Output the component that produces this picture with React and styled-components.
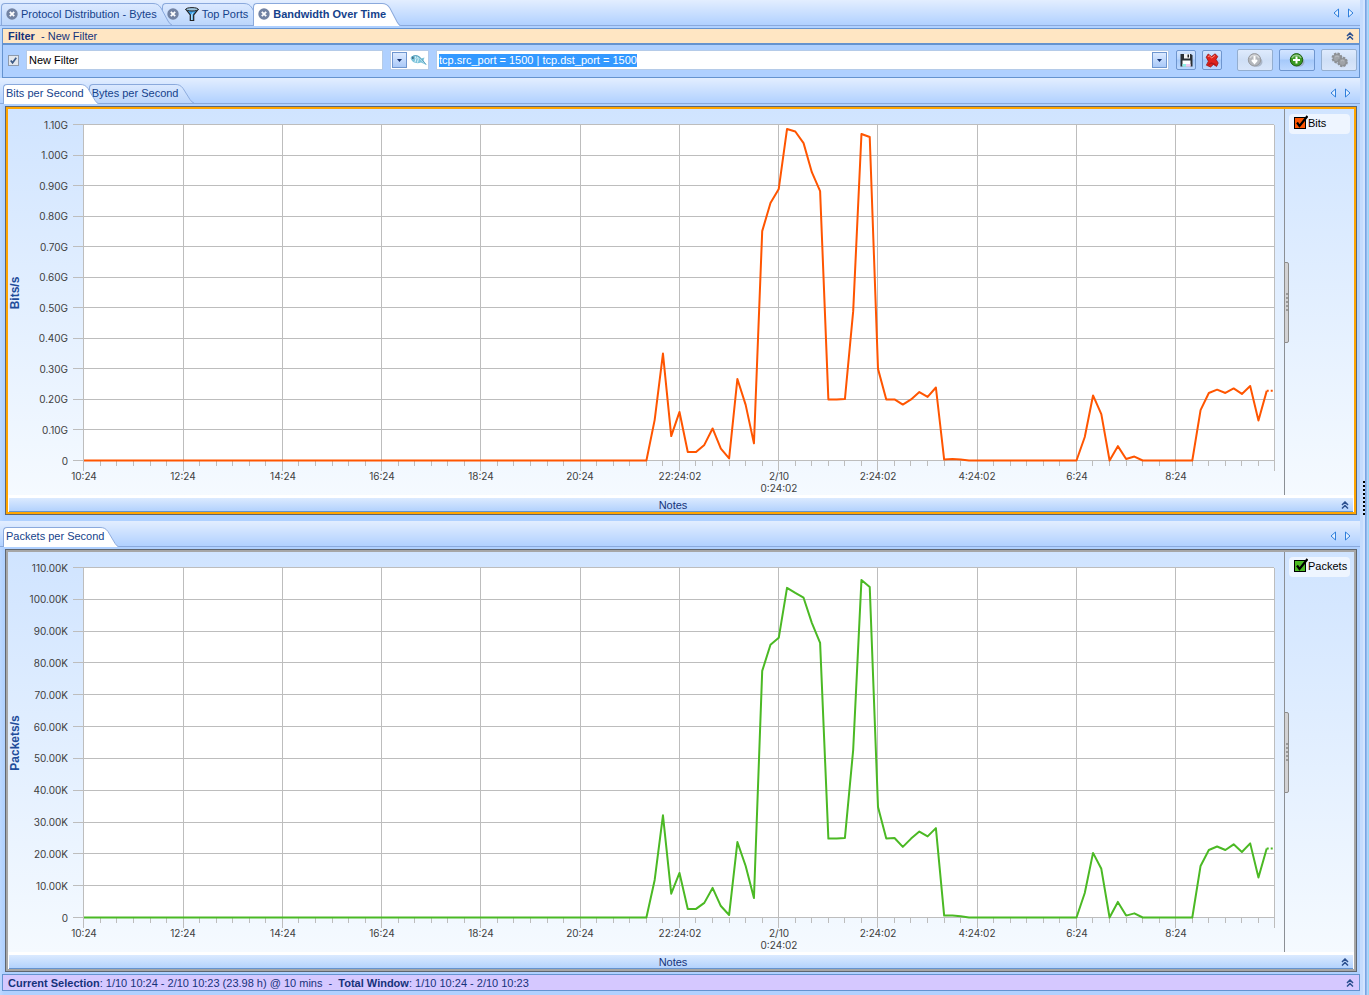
import React, { useLayoutEffect, useRef, useState } from "react";
import styled, { createGlobalStyle, css } from "styled-components";

const GlobalStyle = createGlobalStyle`
  *, *::before, *::after { box-sizing: border-box; }
  body {
    margin: 0;
    background: #b0d1ff;
    font-family: "Liberation Sans", Arial, sans-serif;
    font-size: 11px;
    line-height: 14px;
    color: #15428b;
  }
  button, input { font: inherit; color: inherit; }
  button { padding: 0; border: 0; background: none; }
`;

/* ---------- page frame ---------- */

const Page = styled.div`
  display: grid;
  grid-template-columns: minmax(0, 1fr) 9px;
  min-height: 100vh;
`;

const Main = styled.main`
  display: flex;
  flex-direction: column;
  min-width: 0;
  background: linear-gradient(90deg, #bcd8ff, #b0d1ff 4px);
`;

const Splitter = styled.div`
  display: flex;
  flex-direction: column;
  justify-content: center;
  align-items: flex-start;
  padding-left: 3px;
  background: linear-gradient(
    90deg,
    #c6dcfd 0 3px, #d3e4ff 3px 5px, #7aa6e2 5px 6px, #8fb6ec 6px 7px, #b4d2fb 7px 8px, #9ad8f6 8px
  );
`;

const Grip = styled.div`
  width: 2px;
  height: 34px;
  background: repeating-linear-gradient(#000 0 2px, transparent 2px 4px);
`;

/* ---------- tabs ---------- */

const Strip = styled.div`
  display: flex;
  align-items: flex-end;
  height: 26px;
  padding-left: ${(p) => (p.$inner ? 3 : 1)}px;
  padding-right: ${(p) => (p.$inner ? 9 : 6)}px;
  border-bottom: 1px solid #8aa9dc;
  background: linear-gradient(#e3eeff, #b1d1ff);
`;

const TabList = styled.div`
  display: flex;
  align-items: flex-end;
  flex: 1;
  min-width: 0;
  isolation: isolate;
`;

const TabButton = styled.button`
  position: relative;
  z-index: ${(p) => p.$order};
  display: flex;
  height: ${(p) => (p.$inner ? 19 : 22) + (p.$active ? 1 : 0)}px;
  margin-right: -10px;
  margin-bottom: ${(p) => (p.$active ? -1 : 0)}px;
  color: #15428b;
  font-weight: ${(p) => (p.$active && !p.$inner ? 700 : 400)};
  white-space: nowrap;
`;

const TabBody = styled.span`
  display: flex;
  align-items: center;
  gap: 3px;
  padding-left: ${(p) => (p.$inner ? 2 : 4)}px;
  padding-bottom: ${(p) => (p.$active ? 3 : 2)}px;
  border: 1px solid #8aa9dc;
  border-width: 1px 0 0 1px;
  border-radius: 4px 0 0 0;
  background: ${(p) => (p.$active ? "#fff" : "linear-gradient(#dbe9ff, #bcd6fb)")};
`;

const TabLabel = styled.span`
  position: relative;
  z-index: 1;
  margin-right: -4px;
`;

const TabCap = styled.svg`
  width: 19px;
  height: 100%;
  flex: none;
`;

function Tab({ label, icons, active, inner, order }) {
  const gid = "cap" + order + (inner ? "i" : "o");
  return (
    <TabButton type="button" role="tab" aria-selected={!!active} $active={active} $inner={inner} $order={order}>
      <TabBody $active={active} $inner={inner}>
        {icons}
        <TabLabel>{label}</TabLabel>
      </TabBody>
      <TabCap viewBox="0 0 19 22" preserveAspectRatio="none" aria-hidden="true">
        <defs>
          <linearGradient id={gid} x2="0" y2="1">
            <stop offset="0" stopColor="#dbe9ff" />
            <stop offset="1" stopColor="#bcd6fb" />
          </linearGradient>
        </defs>
        <path d="M0 0.5 C4 0.5 6 2 8 5 L15 18 Q17 21.5 19 22 L0 22Z" fill={active ? "#fff" : `url(#${gid})`} />
        <path d="M0 0.5 C4 0.5 6 2 8 5 L15 18 Q17 21.5 19 22" fill="none" stroke="#8aa9dc" />
      </TabCap>
    </TabButton>
  );
}

const CloseIcon = () => (
  <svg width="12" height="12" viewBox="0 0 12 12" aria-hidden="true">
    <circle cx="6" cy="6" r="5.7" fill="#7283a3" />
    <path d="M3.8 3.8 L8.2 8.2 M8.2 3.8 L3.8 8.2" stroke="#fff" strokeWidth="1.8" />
  </svg>
);

const FunnelIcon = () => (
  <svg width="14" height="14" viewBox="0 0 14 14" aria-hidden="true">
    <path d="M1 2.5 L5.3 8 V13.5 H8.7 V8 L13 2.5Z" fill="#3aa0e8" stroke="#222" strokeWidth="1.2" />
    <path d="M6.2 7.5 V13 H7.4 V7.5 L9 4Z" fill="#c7eaff" />
    <ellipse cx="7" cy="2.3" rx="6.2" ry="1.7" fill="#9cc4dd" stroke="#222" strokeWidth="1" />
  </svg>
);

const ArrowPair = styled.div`
  display: flex;
  gap: 6px;
  align-self: center;
  padding-top: ${(p) => (p.$inner ? 4 : 0)}px;
`;

const IconButton = styled.button`
  display: flex;
  align-items: center;
  justify-content: center;
`;

function Arrows({ inner }) {
  return (
    <ArrowPair $inner={inner}>
      <IconButton type="button" aria-label="Previous tab">
        <svg width="8" height="10" viewBox="0 0 8 10"><path d="M6.5 1 V9 L2 5Z" fill="#e4f0ff" stroke="#2f7fdc" /></svg>
      </IconButton>
      <IconButton type="button" aria-label="Next tab">
        <svg width="8" height="10" viewBox="0 0 8 10"><path d="M2.5 1 V9 L7 5Z" fill="#e4f0ff" stroke="#2f7fdc" /></svg>
      </IconButton>
    </ArrowPair>
  );
}

const Chevrons = ({ label }) => (
  <IconButton type="button" aria-label={label}>
    <svg width="8" height="8" viewBox="0 0 8 8">
      <path d="M1 4 L4 1 L7 4 M1 7.5 L4 4.5 L7 7.5" fill="none" stroke="#2b4f8f" strokeWidth="1.5" />
    </svg>
  </IconButton>
);

/* ---------- filter ---------- */

const FilterBox = styled.section`
  margin: 2px 0 0 2px;
  border: 1px solid #6593cf;
`;

const FilterHead = styled.header`
  display: flex;
  align-items: center;
  justify-content: space-between;
  height: 15px;
  padding: 0 5px;
  background: #ffe6c3;
  border-bottom: 1px solid #6593cf;
  color: #15327a;
  white-space: pre;
`;

const FilterRow = styled.form`
  display: flex;
  align-items: center;
  gap: 7px;
  height: 33px;
  padding: 0 2px 2px 5px;
  border-top: 1px solid #6593cf;
  background: #afd0ff;
`;

const Check = styled.input`
  appearance: none;
  flex: none;
  width: ${(p) => (p.$color ? 12 : 11)}px;
  height: ${(p) => (p.$color ? 12 : 11)}px;
  margin: 0;
  border: 1px solid ${(p) => (p.$color ? "#000" : "#8e9aab")};
  background: ${(p) => p.$color || "#e3e7ed"};
`;

const CheckWrap = styled.label`
  position: relative;
  display: flex;
  flex: none;
  svg { position: absolute; left: 0; bottom: 0; pointer-events: none; }
`;

const Field = styled.div`
  display: flex;
  align-items: center;
  gap: 3px;
  height: 20px;
  border: 1px solid #b5cbe8;
  background: #fff;
  ${(p) =>
    p.$grow
      ? css`flex: 1; min-width: 0; padding: 0 1px 0 2px; justify-content: space-between;`
      : css`flex: none; padding: 0 1px;`}
`;

const NameInput = styled.input`
  width: 357px;
  height: 20px;
  padding: 0 2px;
  border: 1px solid #b5cbe8;
  background: #fff;
  color: #000;
`;

const ExprInput = styled.input`
  field-sizing: content;
  height: 13px;
  padding: 0;
  border: 0;
  background: #3399ff;
  color: #fff;
`;

const DropButton = styled.button`
  display: flex;
  align-items: center;
  justify-content: center;
  flex: none;
  width: 15px;
  height: 16px;
  border: 1px solid #6f96cf;
  background: linear-gradient(#dceaff, #a9c9f8);
`;

const ToolButton = styled.button`
  display: flex;
  align-items: center;
  justify-content: center;
  flex: none;
  width: ${(p) => (p.$wide ? 36 : 20)}px;
  height: ${(p) => (p.$wide ? 22 : 20)}px;
  border: 1px solid ${(p) => (p.$off ? "#94aecf" : "#6f96cf")};
  border-radius: 2px;
  background: ${(p) =>
    p.$off
      ? "linear-gradient(#dfebfd, #cfdff6 50%, #d9e6fa)"
      : "linear-gradient(#d3e5ff, #b9d5fd 45%, #a5c9fa 50%, #bcd8ff)"};
`;

const Tools = styled.div`
  display: flex;
  align-items: center;
  gap: 6px;
  padding-right: ${(p) => (p.$wide ? 0 : 8)}px;
`;

const Down = () => (
  <svg width="5" height="3" viewBox="0 0 5 3" aria-hidden="true"><path d="M0 0 H5 L2.5 3Z" fill="#15326f" /></svg>
);

const FishIcon = () => (
  <svg width="17" height="12" viewBox="0 0 17 12" aria-hidden="true">
    <path d="M0.5 4 C3 0 8 0.5 11 4.5 L14.5 3.5 L13.5 6.5 L16.5 11 L11 8.5 C7 10 2 9 0.5 4Z" fill="#7cc3da" />
    <path d="M5 1.5 Q7 4 5 8 M7.5 2.5 Q9 5 7.5 8.5 M10 4.5 L15 9.5" fill="none" stroke="#e2f6fc" strokeWidth="1" />
    <path d="M1.5 3 Q7 -0.5 11 4.5 L16 10.5" fill="none" stroke="#3f8fae" strokeWidth="0.8" />
    <circle cx="2.9" cy="4" r="0.8" fill="#123" />
  </svg>
);

const SaveIcon = () => (
  <svg width="15" height="15" viewBox="0 0 15 15" aria-hidden="true">
    <path d="M1.5 1 H12 L13.5 2.5 V13.5 H1.5Z" fill="#2b3036" />
    <path d="M5 1 H11 V5.5 H5Z" fill="#f4f4f4" />
    <path d="M8.5 1.5 H10 V4.5 H8.5Z" fill="#222" />
    <path d="M3.5 7.5 H11.5 V13.5 H3.5Z" fill="#fff" />
    <path d="M3.5 11 H7 V13.5 H3.5Z" fill="#8ff0e8" />
    <path d="M7 11 H11.5 V13.5 H7Z" fill="#f1c9ef" />
  </svg>
);

const DeleteIcon = () => (
  <svg width="14" height="15" viewBox="0 0 14 15" aria-hidden="true">
    <path
      d="M1.2 4.2 L3.2 1 L6.6 3.6 L10 0.8 L12.8 3.4 L11 6.4 L13.2 10 L11.6 13.4 L8.4 11.4 L5.6 14 L1.4 12.2 L3.4 8.2Z"
      fill="#e0231d"
      stroke="#981414"
      strokeWidth="0.8"
    />
    <path d="M3 4 L4 2.6 L6.8 5 L10 2.4" fill="none" stroke="#ff8a7a" />
    <path d="M3.4 11.6 L6.4 10 L10.6 11.6" fill="none" stroke="#b3171a" strokeWidth="1.4" />
  </svg>
);

const BallIcon = ({ color, dark, d }) => (
  <svg width="16" height="14" viewBox="0 0 16 14" aria-hidden="true">
    <ellipse cx="9.5" cy="9" rx="6" ry="4.8" fill="#8f99a8" opacity="0.6" />
    <circle cx="7.5" cy="6.8" r="6.2" fill={color} stroke={dark} />
    <path d="M3 5 A5 5 0 0 1 12 5" fill="none" stroke="#fff" strokeWidth="1.5" opacity="0.45" />
    <path d={d} fill="none" stroke="#fff" strokeWidth="2" />
  </svg>
);

const GearsIcon = () => (
  <svg width="17" height="16" viewBox="0 0 17 16" aria-hidden="true">
    <g fill="#a0a3a7" stroke="#8d9094">
      <circle cx="6" cy="6" r="4" strokeWidth="1" />
      <circle cx="6" cy="6" r="4.4" fill="none" strokeWidth="2.2" strokeDasharray="2.2 1.25" />
      <circle cx="11.5" cy="10" r="3.8" strokeWidth="1" />
      <circle cx="11.5" cy="10" r="4.2" fill="none" strokeWidth="2.2" strokeDasharray="2.2 1.1" />
    </g>
    <path d="M4 5 Q6 3 8 5 M10 9 Q11.5 7.5 13 9" fill="none" stroke="#b9bcc0" />
  </svg>
);

const CheckMark = ({ size, color }) => (
  <svg width={size} height={size} viewBox="0 0 14 14" aria-hidden="true">
    <path
      d={size > 12 ? "M3 7.5 L5.5 11 L13.5 1" : "M3.5 7 L5.8 10 L10.5 3.5"}
      fill="none"
      stroke={color}
      strokeWidth="2.2"
    />
  </svg>
);

/* ---------- chart panels ---------- */

const Panel = styled.section`
  margin: 2px 3px 0 5px;
  border: 1px solid #5f6670;
`;

const PanelInner = styled.div`
  border: 2px solid ${(p) => (p.$selected ? "#ffa500" : "#a6a6a6")};
  background: #fff;
`;

const ChartRow = styled.div`
  display: grid;
  grid-template-columns: minmax(0, 1fr) 70px;
  background: linear-gradient(#d0e4ff, #f5faff);
`;

const PlotHost = styled.div`
  min-width: 0;
  overflow: hidden;
  svg { display: block; }
  text { fill: #404040; font-family: Inter, "Liberation Sans", sans-serif; font-size: 10px; }
  .axis { fill: #1f4c9a; font-family: "Liberation Sans", Arial, sans-serif; font-size: 12px; font-weight: 700; }
`;

const Legend = styled.aside`
  position: relative;
  padding: 5px 4px;
  border-left: 1px solid #8b8f95;
`;

const LegendItem = styled.label`
  display: flex;
  align-items: center;
  gap: 2px;
  height: 20px;
  padding: 0 0 2px 5px;
  border-radius: 4px;
  background: #eef5ff;
  color: #000;
`;

const Handle = styled.div`
  position: absolute;
  left: -1px;
  top: calc(50% - 40px);
  width: 5px;
  height: 81px;
  padding: 30px 1px 0;
  border: 1px solid #8c8c8c;
  border-radius: 0 2px 2px 0;
  background: #d2d2d4;
  &::after {
    content: "";
    display: block;
    width: 2px;
    height: 19px;
    background: repeating-linear-gradient(#9a9a9a 0 2px, transparent 2px 4px);
  }
`;

const NotesBar = styled.footer`
  display: grid;
  grid-template-columns: 1fr 16px;
  align-items: center;
  height: 14px;
  margin: 3px 1px 0;
  border-bottom: 1px solid #6593cf;
  background: linear-gradient(#dbeaff, #b3d2fd);
  color: #15327a;
  text-align: center;
`;

const Status = styled.footer`
  display: flex;
  align-items: center;
  justify-content: space-between;
  height: 17px;
  margin: 2px 0 4px 2px;
  padding: 0 5px;
  border: 1px solid #6593cf;
  background: #d5c8ff;
  color: #15327a;
  white-space: pre;
`;

const Gap = styled.div`
  height: 6px;
`;

const flat = (n) => Array(n).fill(0);

const BITS = [
  ...flat(69), 13.3, 35, 8, 15.9, 2.8, 2.8, 5.1, 10.5, 3.9, 0.7, 26.7, 18.2, 5.6, 75.1, 84.3, 88.9, 108.5, 107.7,
  103.9, 94.4, 88.2, 20, 20, 20.1, 48.9, 106.9, 105.9, 30, 20, 20, 18.3, 20, 22.4, 20.8, 23.9, 0.3, 0.5, 0.3,
  ...flat(14), 7.7, 21.3, 15.2, 0, 4.7, 0.5, 1.3, ...flat(7), 16.5, 22.1, 23.2, 22.1, 23.6, 21.8, 24.4, 13.1, 22.8,
];

const PACKETS = [
  ...flat(69), 11.8, 32.1, 7.5, 14, 2.7, 2.7, 4.6, 9.3, 3.6, 0.8, 23.7, 16.2, 6.1, 77.5, 85.7, 87.9, 103.6, 102,
  100.5, 92.6, 86.3, 24.8, 24.8, 25, 52.7, 106.1, 103.9, 34.7, 24.8, 25, 22.2, 24.8, 27, 25.5, 28.1, 0.6, 0.6, 0.4,
  ...flat(14), 7.7, 20.3, 15.3, 0, 4.9, 0.6, 1.3, ...flat(7), 16.2, 21.2, 22.3, 21.2, 23, 20.6, 23.3, 12.6, 21.7,
];

const TIMES = ["10:24", "12:24", "14:24", "16:24", "18:24", "20:24", "22:24:02", "2/10", "2:24:02", "4:24:02", "6:24", "8:24"];

const bitLabel = (i) => (i === 0 ? "0" : (i / 10).toFixed(2) + "G");
const packetLabel = (i) => (i === 0 ? "0" : (i * 10).toFixed(2) + "K");

function Plot({ data, color, title, format, plotHeight }) {
  const host = useRef(null);
  const [width, setWidth] = useState(1276);
  useLayoutEffect(() => {
    const measure = () => setWidth(Math.round(host.current.clientWidth));
    measure();
    const watcher = new ResizeObserver(measure);
    watcher.observe(host.current);
    return () => watcher.disconnect();
  }, []);

  const left = 75;
  const top = 16;
  const right = width - 10;
  const bottom = top + plotHeight;
  const height = bottom + 34;
  const px = (i) => left + ((right - left) * i) / 144;
  const py = (v) => bottom - 0.5 - (plotHeight * v) / 110;
  const snapX = (i) => Math.round(px(i) + 0.4) + 0.5;
  const snapY = (v) => Math.floor(py(v)) + 0.5;
  const points = data.map((v, i) => `${px(i) + 1},${py(v)}`).join(" ");
  const last = data[data.length - 1];

  return (
    <PlotHost ref={host}>
      <svg width={width} height={height} role="img" aria-label={title}>
        <rect x={left} y={top} width={Math.max(0, right - left)} height={plotHeight} fill="#fff" />
        <g stroke="#bdbdbd">
          {Array.from({ length: 12 }, (_, i) => (
            <line key={"h" + i} x1={left - 10} x2={right} y1={snapY(i * 10)} y2={snapY(i * 10)} />
          ))}
          {Array.from({ length: 13 }, (_, i) => (
            <line key={"v" + i} x1={snapX(i * 12)} x2={snapX(i * 12)} y1={top} y2={bottom + 10} />
          ))}
          {Array.from({ length: 72 }, (_, i) => (
            <line key={"m" + i} x1={snapX(i * 2)} x2={snapX(i * 2)} y1={bottom} y2={bottom + 5} />
          ))}
        </g>
        <polyline points={points} fill="none" stroke={color} strokeWidth="2" strokeLinejoin="round" />
        <line x1={px(143) + 1} x2={px(144)} y1={py(last)} y2={py(last)} stroke={color} strokeWidth="2" strokeDasharray="2 2" />
        {Array.from({ length: 12 }, (_, i) => (
          <text key={i} x="60" y={Math.round(py(i * 10)) + 4} textAnchor="end">{format(i)}</text>
        ))}
        {TIMES.map((t, i) => (
          <text key={t} x={Math.round(px(i * 12)) + 1} y={bottom + 19} textAnchor="middle">{t}</text>
        ))}
        <text x={Math.round(px(84)) + 1} y={bottom + 31} textAnchor="middle">0:24:02</text>
        <text className="axis" textAnchor="middle" transform={`translate(11 ${top + plotHeight / 2}) rotate(-90)`}>{title}</text>
      </svg>
    </PlotHost>
  );
}

function ChartPanel({ selected, legend, ...plot }) {
  return (
    <Panel>
      <PanelInner $selected={selected}>
        <ChartRow>
          <Plot {...plot} />
          <Legend>
            <LegendItem>
              <CheckWrap as="span">
                <Check type="checkbox" defaultChecked $color={plot.color} />
                <CheckMark size={14} color="#000" />
              </CheckWrap>
              {legend}
            </LegendItem>
            <Handle />
          </Legend>
        </ChartRow>
        <NotesBar>
          <span>Notes</span>
          <Chevrons label="Expand notes" />
        </NotesBar>
      </PanelInner>
    </Panel>
  );
}

export default function App() {
  return (
    <Page>
      <GlobalStyle />
      <Main>
        <Strip>
          <TabList role="tablist">
            <Tab order={2} label="Protocol Distribution - Bytes" icons={<CloseIcon />} />
            <Tab order={1} label="Top Ports" icons={<><CloseIcon /><span /><FunnelIcon /></>} />
            <Tab order={3} active label="Bandwidth Over Time" icons={<CloseIcon />} />
          </TabList>
          <Arrows />
        </Strip>

        <FilterBox>
          <FilterHead>
            <span><b>Filter</b>{"  - New Filter"}</span>
            <Chevrons label="Collapse filter" />
          </FilterHead>
          <FilterRow onSubmit={(e) => e.preventDefault()}>
            <CheckWrap>
              <Check type="checkbox" defaultChecked aria-label="Enable filter" />
              <CheckMark size={11} color="#3c5a86" />
            </CheckWrap>
            <NameInput aria-label="Filter name" defaultValue="New Filter" />
            <Field>
              <DropButton type="button" aria-label="Filter type"><Down /></DropButton>
              <FishIcon />
            </Field>
            <Field $grow>
              <ExprInput aria-label="Filter expression" defaultValue="tcp.src_port = 1500 | tcp.dst_port = 1500" />
              <DropButton type="button" aria-label="Recent expressions"><Down /></DropButton>
            </Field>
            <Tools>
              <ToolButton type="button" aria-label="Save"><SaveIcon /></ToolButton>
              <ToolButton type="button" aria-label="Delete"><DeleteIcon /></ToolButton>
            </Tools>
            <Tools $wide>
              <ToolButton type="button" $wide $off aria-label="Apply">
                <BallIcon color="#b4b7bc" dark="#97999e" d="M7.5 3 V9 M5 7 L7.5 10 L10 7" />
              </ToolButton>
              <ToolButton type="button" $wide aria-label="Add">
                <BallIcon color="#3a9a22" dark="#1d5c14" d="M7.5 3.5 V10.5 M4 7 H11" />
              </ToolButton>
              <ToolButton type="button" $wide $off aria-label="Settings"><GearsIcon /></ToolButton>
            </Tools>
          </FilterRow>
        </FilterBox>

        <Strip $inner>
          <TabList role="tablist">
            <Tab inner order={2} active label="Bits per Second" />
            <Tab inner order={1} label="Bytes per Second" />
          </TabList>
          <Arrows inner />
        </Strip>
        <ChartPanel selected legend="Bits" data={BITS} color="#ff5500" title="Bits/s" format={bitLabel} plotHeight={336} />

        <Gap />
        <Strip $inner>
          <TabList role="tablist">
            <Tab inner order={3} active label="Packets per Second" />
          </TabList>
          <Arrows inner />
        </Strip>
        <ChartPanel legend="Packets" data={PACKETS} color="#4bb924" title="Packets/s" format={packetLabel} plotHeight={350} />

        <Status>
          <span><b>Current Selection</b>{": 1/10 10:24 - 2/10 10:23 (23.98 h) @ 10 mins  -  "}<b>Total Window</b>: 1/10 10:24 - 2/10 10:23</span>
          <Chevrons label="Expand selection" />
        </Status>
      </Main>
      <Splitter><Grip /></Splitter>
    </Page>
  );
}
